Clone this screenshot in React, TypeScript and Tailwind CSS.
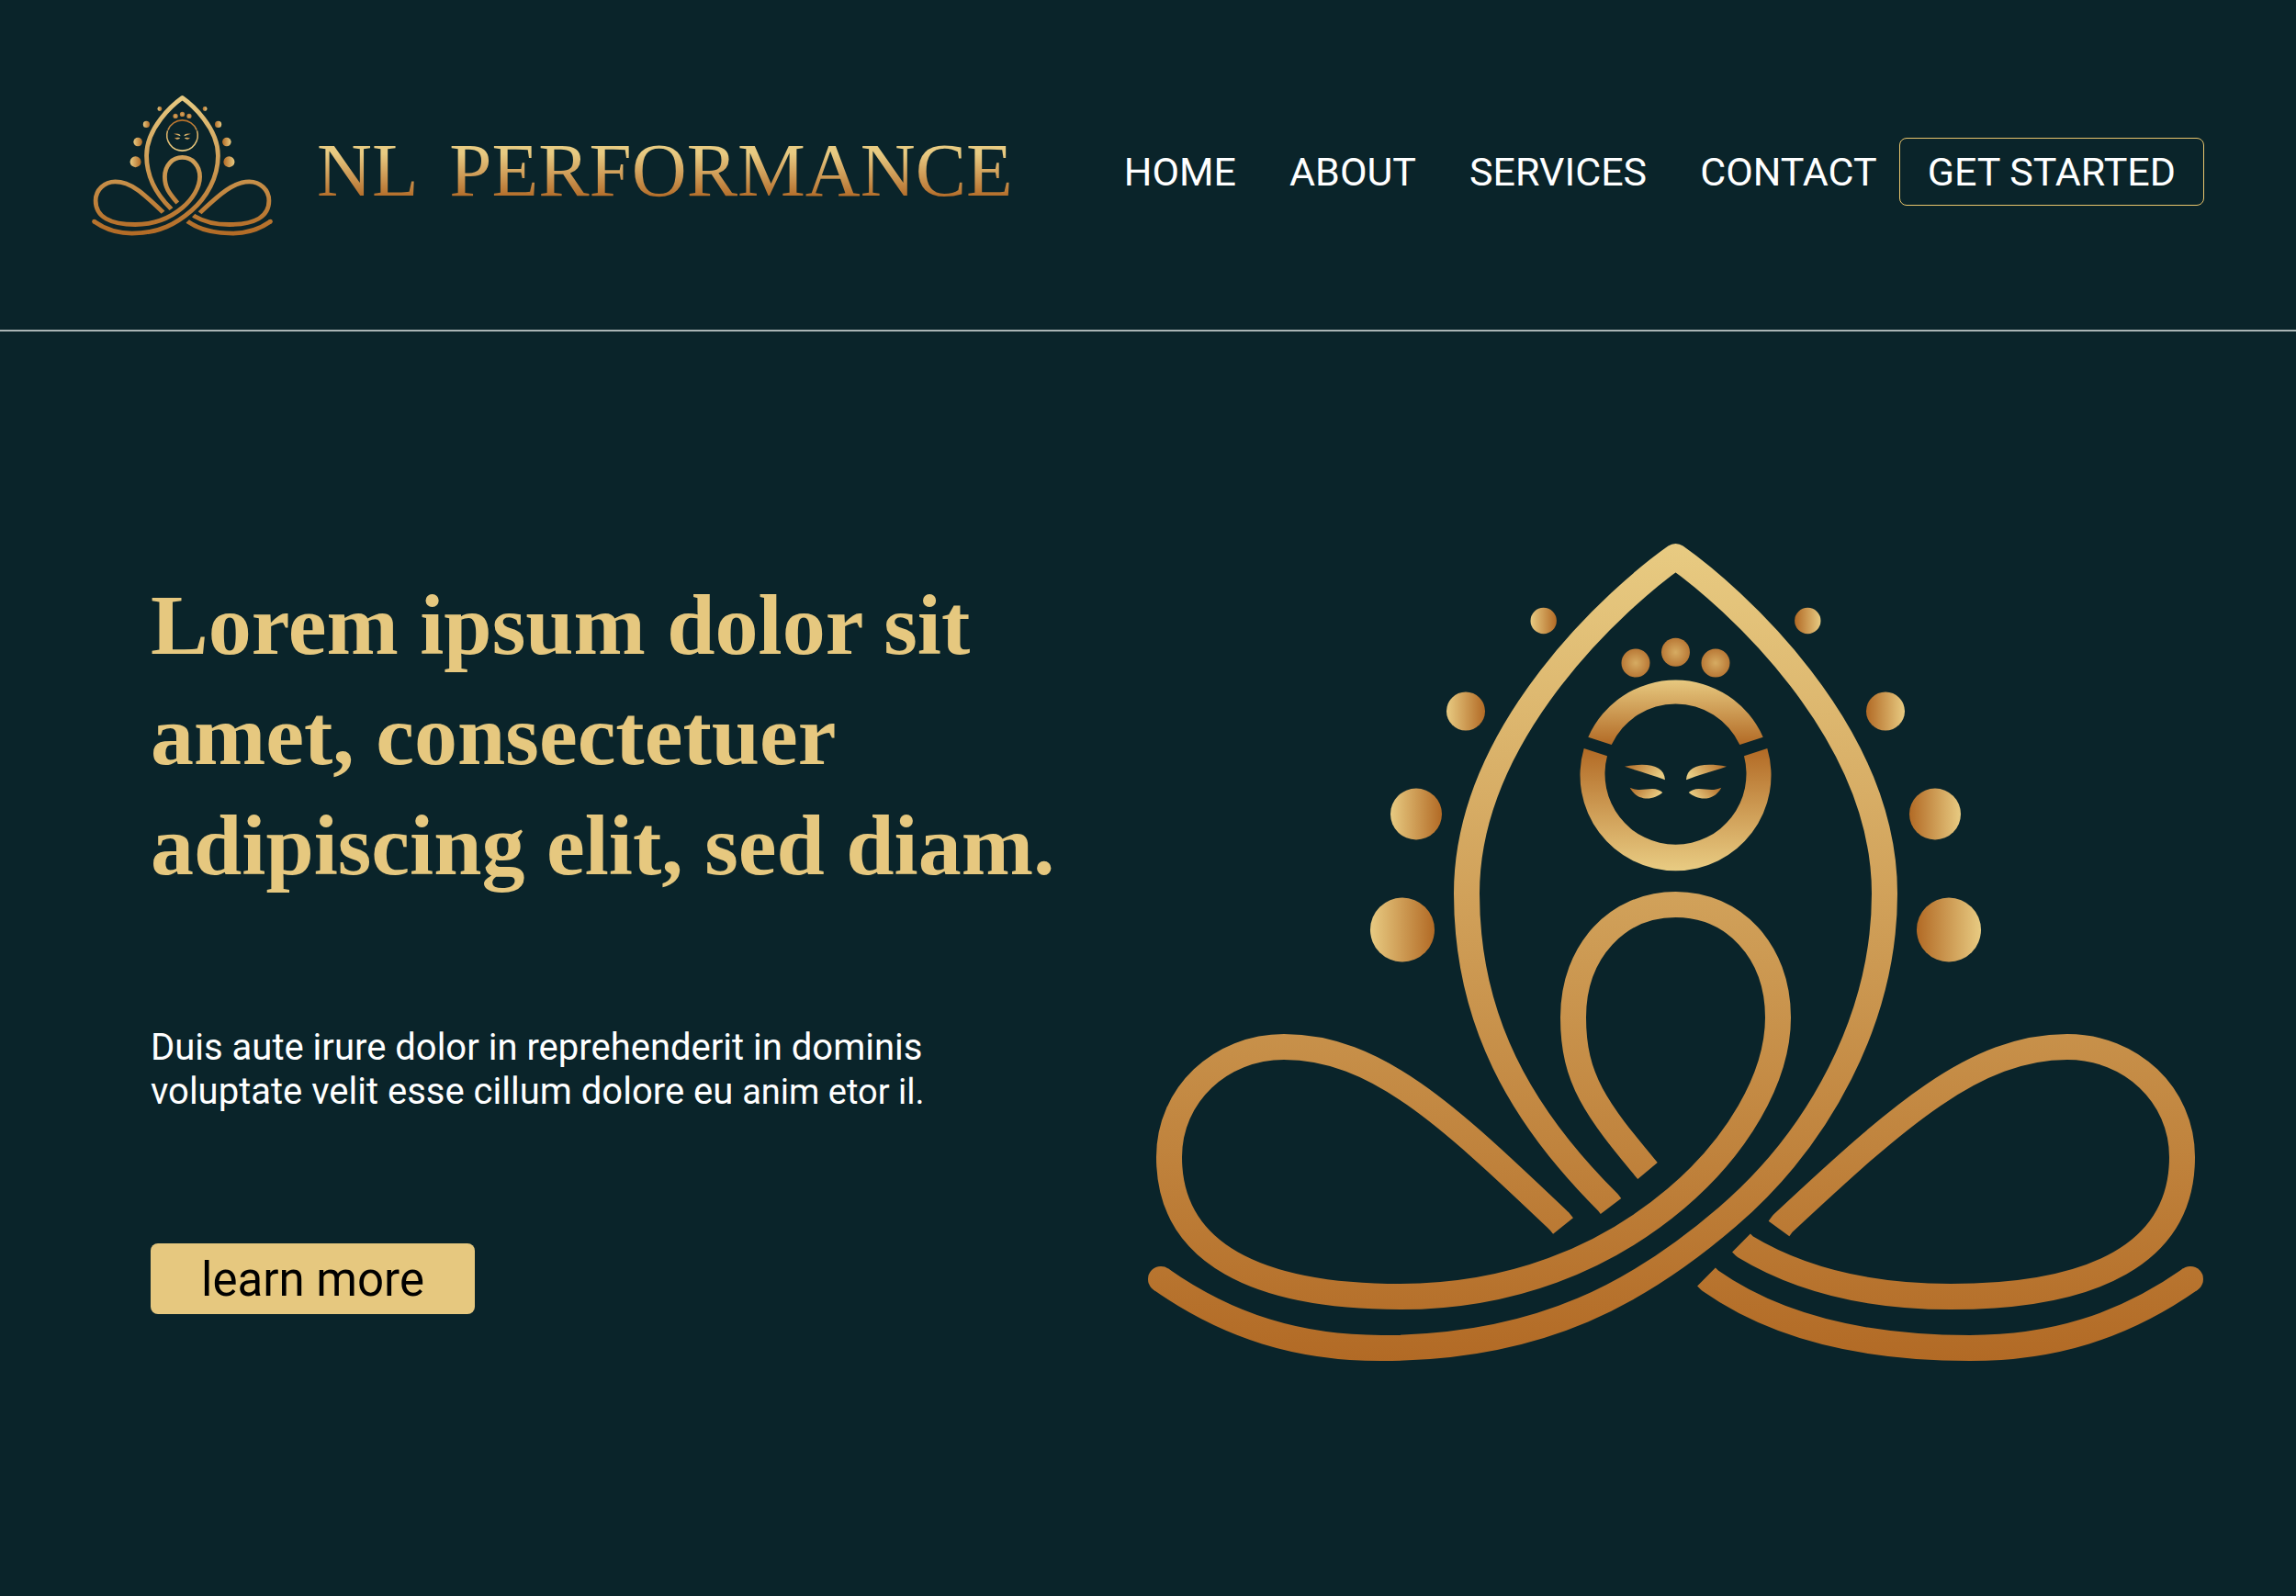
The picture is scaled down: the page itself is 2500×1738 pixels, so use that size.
import React, { useId } from "react";

type EmblemProps = {
  className?: string;
  thinHead?: boolean;
};

const LEFT_BEADS = [
  { cx: 1680.7, cy: 676, r: 14.2 },
  { cx: 1596, cy: 774.5, r: 21 },
  { cx: 1542, cy: 886.5, r: 28 },
  { cx: 1527, cy: 1012.5, r: 35 },
];

const CROWN = [
  { cx: 1781, cy: 722 },
  { cx: 1824.5, cy: 710.3 },
  { cx: 1868, cy: 722 },
];

const MIRROR = "translate(3649 0) scale(-1 1)";

function Beads({ fill }: { fill: string }) {
  return (
    <>
      {LEFT_BEADS.map((b) => (
        <circle key={b.cy} cx={b.cx} cy={b.cy} r={b.r} fill={fill} />
      ))}
    </>
  );
}

function Eye({ fill }: { fill: string }) {
  return (
    <g fill={fill}>
      <path d="M1769 834.7C1796 830 1812 834 1813 849.3C1800 844 1784 840 1769 834.7Z" />
      <path d="M1774.7 857.7C1784 862 1791 859 1799 859C1804 859 1808 861 1810.3 863C1800 872 1783 873 1774.7 857.7Z" />
    </g>
  );
}

/* Seated lotus figure drawn in gold line work. */
function Emblem({ className, thinHead = false }: EmblemProps) {
  const id = useId();
  const body = `${id}-body`;
  const side = `${id}-side`;
  const crown = `${id}-crown`;
  const browTop = `${id}-top`;
  const jaw = `${id}-jaw`;

  return (
    <svg viewBox="1249 591 1151 892" className={className} aria-hidden="true">
      <defs>
        <linearGradient id={body} gradientUnits="userSpaceOnUse" x1="0" y1="591" x2="0" y2="1483">
          <stop offset="0" stopColor="#e8cb82" />
          <stop offset="1" stopColor="#b26a25" />
        </linearGradient>
        <linearGradient id={side} x1="0" y1="0" x2="1" y2="0">
          <stop offset="0" stopColor="#e8cb82" />
          <stop offset="1" stopColor="#b26a25" />
        </linearGradient>
        <linearGradient id={`${id}-eye`} x1="0" y1="0" x2="1" y2="0.3">
          <stop offset="0" stopColor="#b26a25" />
          <stop offset="1" stopColor="#e8cb82" />
        </linearGradient>
        <radialGradient id={crown}>
          <stop offset="0" stopColor="#d6ab62" />
          <stop offset="1" stopColor="#b97936" />
        </radialGradient>
        <linearGradient id={browTop} gradientUnits="userSpaceOnUse" x1="0" y1="739" x2="0" y2="811">
          <stop offset="0" stopColor={thinHead ? "#b26a25" : "#e8cb82"} />
          <stop offset="1" stopColor={thinHead ? "#c98f48" : "#b26a25"} />
        </linearGradient>
        <linearGradient id={jaw} gradientUnits="userSpaceOnUse" x1="0" y1="815" x2="0" y2="947">
          <stop offset="0" stopColor={thinHead ? "#d6ab62" : "#b26a25"} />
          <stop offset="1" stopColor="#e8cb82" />
        </linearGradient>
      </defs>

      <g fill="none" stroke={`url(#${body})`} strokeWidth="28" strokeLinejoin="round">
        <path d="M1754 1313.5L1751 1309.5C1655 1214 1597 1110 1597 973C1597 795 1765 648 1824.5 606C1884 648 2052 795 2052 973C2052 1110 1980 1240 1881 1325C1788 1405 1680 1468 1504 1468C1415 1468 1338 1445 1264 1393" />
        <path d="M1794 1275C1738 1208 1713 1175 1713 1108C1713 1035 1762 985 1824.5 985C1887 985 1936 1035 1936 1108C1936 1175 1890 1250 1825 1305C1747 1371 1645 1412 1525 1412C1369 1412 1273 1365 1273 1260C1273 1192 1329 1140 1398 1140C1499 1140 1578 1216 1698 1330L1702 1335" />
        <path d="M1896 1353.5L1900 1357.5C1967 1398 2045 1412 2124 1412C2280 1412 2376 1365 2376 1260C2376 1192 2320 1140 2251 1140C2150 1140 2066 1216 1941 1332.5L1937 1338" />
        <path d="M1858 1390.5L1862 1394.5C1938 1448 2040 1468 2145 1468C2234 1468 2311 1445 2385 1393" />
      </g>
      <g fill={`url(#${body})`}>
        <circle cx="1264" cy="1393" r="14" />
        <circle cx="2385" cy="1393" r="14" />
      </g>

      {thinHead ? (
        <g fill="none" strokeWidth="9">
          <path d="M1733 811A98 98 0 0 1 1916 811" stroke={`url(#${browTop})`} />
          <path d="M1731 815A98 98 0 1 0 1918 815" stroke={`url(#${jaw})`} />
        </g>
      ) : (
        <g>
          <path
            d="M1729.3 802.7A104 104 0 0 1 1919.7 802.7L1894.3 811A77 77 0 0 0 1754.7 811Z"
            fill={`url(#${browTop})`}
          />
          <path
            d="M1724.7 815A104 104 0 1 0 1924.3 815L1899 823.3A77 77 0 1 1 1750 823.3Z"
            fill={`url(#${jaw})`}
          />
        </g>
      )}

      {CROWN.map((c) => (
        <circle key={c.cx} cx={c.cx} cy={c.cy} r="15.5" fill={`url(#${crown})`} />
      ))}

      <Beads fill={`url(#${side})`} />
      <Eye fill={`url(#${id}-eye)`} />
      <g transform={MIRROR}>
        <Beads fill={`url(#${side})`} />
        <Eye fill={`url(#${id}-eye)`} />
      </g>
    </svg>
  );
}

const LINKS = ["HOME", "ABOUT", "SERVICES", "CONTACT"];

export default function App() {
  return (
    <div className="min-h-screen bg-[#0a242a] font-['Roboto',sans-serif] text-white">
      <header className="flex items-center justify-between border-b-2 border-[#aab5b5] px-[100px] pt-[104px] pb-[88px]">
        <a href="#home" className="flex items-center gap-12">
          <Emblem thinHead className="mb-[14px] w-[197px]" />
          <span className="bg-linear-to-b from-[#e8cb82] from-30% to-[#b06823] to-80% bg-clip-text pb-1 font-['Liberation_Serif',serif] text-[83px] leading-[96px] whitespace-nowrap text-transparent">
            NL <span className="ml-4">PERFORMANCE</span>
          </span>
        </a>
        <div className="flex items-center gap-6">
          <nav className="flex gap-[58px]">
            {LINKS.map((label) => (
              <a key={label} href={`#${label.toLowerCase()}`} className="text-[43px] leading-[48px]">
                {label}
              </a>
            ))}
          </nav>
          <button
            type="button"
            className="rounded-lg border border-[#e8c46c] px-[30px] py-3 text-[43px] leading-[48px] whitespace-nowrap"
          >
            GET STARTED
          </button>
        </div>
      </header>

      <main className="grid grid-cols-[1085fr_1151fr] items-start pr-[100px] pl-[164px]">
        <section className="pt-[259px]">
          <h1 className="font-['Liberation_Serif',serif] text-[94px] leading-[120px] font-bold text-[#e6c87f]">
            Lorem ipsum dolor sit amet, consectetuer adipiscing elit, sed diam.
          </h1>
          <p className="mt-[137px] text-[40px] leading-[48px]">
            Duis aute irure dolor in reprehenderit in dominis
            <br />
            voluptate velit esse cillum dolore eu <span className="text-[38px]">anim etor il.</span>
          </p>
          <button
            type="button"
            className="mt-[141px] rounded-lg bg-[#e6c87f] px-[55px] pt-[9px] pb-[7px] text-[51px] leading-[61px] text-black"
          >
            learn more
          </button>
        </section>
        <div className="pt-[230px]">
          <Emblem className="w-full" />
        </div>
      </main>
    </div>
  );
}
